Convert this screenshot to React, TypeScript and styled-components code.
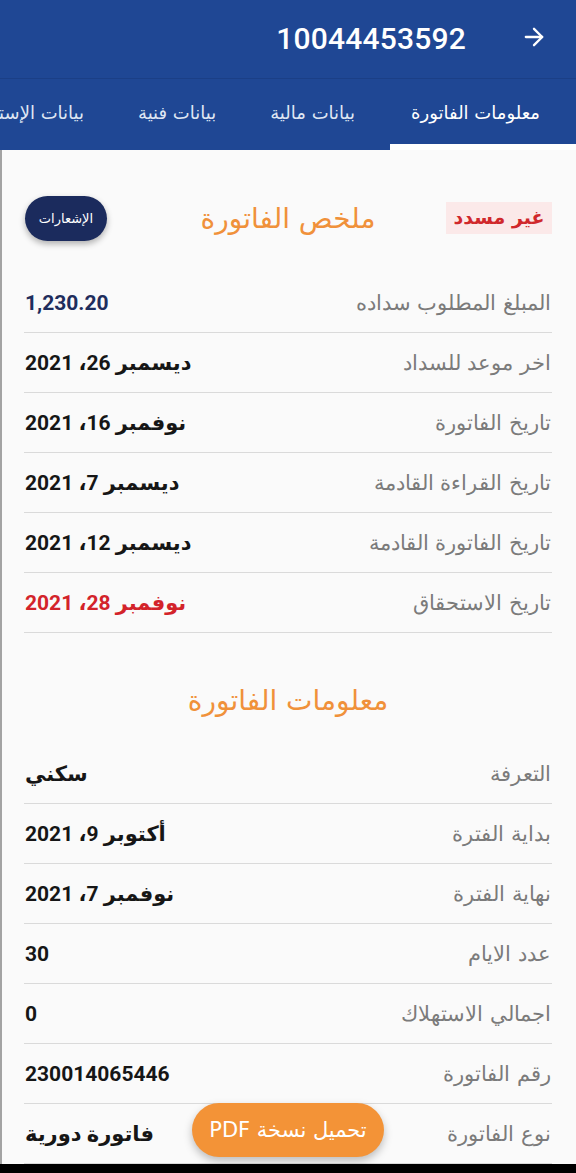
import React from "react";
import styled, { createGlobalStyle } from "styled-components";
import { ArrowRight } from "lucide-react";

const GlobalStyle = createGlobalStyle`
  * { box-sizing: border-box; }
  body {
    margin: 0;
    background: #fafafa;
    font-family: Roboto, "DejaVu Sans", sans-serif;
  }
`;

const summaryRows = [
  { label: "المبلغ المطلوب سداده", value: "1,230.20", tone: "navy" },
  { label: "اخر موعد للسداد", value: "ديسمبر 26، 2021" },
  { label: "تاريخ الفاتورة", value: "نوفمبر 16، 2021" },
  { label: "تاريخ القراءة القادمة", value: "ديسمبر 7، 2021" },
  { label: "تاريخ الفاتورة القادمة", value: "ديسمبر 12، 2021" },
  { label: "تاريخ الاستحقاق", value: "نوفمبر 28، 2021", tone: "red" },
];

const infoRows = [
  { label: "التعرفة", value: "سكني" },
  { label: "بداية الفترة", value: "أكتوبر 9، 2021" },
  { label: "نهاية الفترة", value: "نوفمبر 7، 2021" },
  { label: "عدد الايام", value: "30" },
  { label: "اجمالي الاستهلاك", value: "0" },
  { label: "رقم الفاتورة", value: "230014065446" },
  { label: "نوع الفاتورة", value: "فاتورة دورية" },
];

const tabs = ["معلومات الفاتورة", "بيانات مالية", "بيانات فنية", "بيانات الإستهلاك"];

const App: React.FC = () => {
  return (
    <Page>
      <GlobalStyle />
      <TopBar>
        <BackButton>
          <ArrowRight size={28} strokeWidth={2} color="#fff" />
        </BackButton>
        <Title>10044453592</Title>
      </TopBar>

      <TabBar>
        {tabs.map((t, i) => (
          <Tab key={t} active={i === 0}>
            {t}
          </Tab>
        ))}
      </TabBar>

      <Content>
        <SummaryHead>
          <StatusBadge>غير مسدد</StatusBadge>
          <SectionTitle>ملخص الفاتورة</SectionTitle>
          <NotifyButton>الإشعارات</NotifyButton>
        </SummaryHead>

        {summaryRows.map((r) => (
          <Row key={r.label}>
            <Label>{r.label}</Label>
            <Value tone={r.tone}>{r.value}</Value>
          </Row>
        ))}

        <InfoHead>
          <SectionTitle>معلومات الفاتورة</SectionTitle>
        </InfoHead>

        {infoRows.map((r) => (
          <Row key={r.label}>
            <Label>{r.label}</Label>
            <Value>{r.value}</Value>
          </Row>
        ))}
      </Content>

      <PdfButton>تحميل نسخة PDF</PdfButton>
      <NavStrip />
    </Page>
  );
};

const Page = styled.div`
  direction: rtl;
  position: relative;
  width: 576px;
  overflow: hidden;
`;

const TopBar = styled.header`
  height: 78px;
  background: #1f4794;
  display: flex;
  align-items: center;
  padding: 0 28px 0 0;
  gap: 54px;
`;

const BackButton = styled.div`
  display: flex;
  align-items: center;
  margin-top: -4px;
`;

const Title = styled.h1`
  margin: 0 0 2px;
  color: #fff;
  font-family: Roboto, sans-serif;
  font-weight: 500;
  font-size: 30px;
  letter-spacing: 0.2px;
`;

const TabBar = styled.nav`
  height: 72px;
  background: #1f4794;
  border-top: 1px solid #1b3f86;
  display: flex;
  align-items: stretch;
  white-space: nowrap;
`;

const Tab = styled.div<{ active?: boolean }>`
  position: relative;
  flex: none;
  display: flex;
  align-items: center;
  font-family: "DejaVu Sans", sans-serif;
  font-size: 18px;
  color: ${(p) => (p.active ? "#fff" : "#dfe6f3")};
  padding: ${(p) => (p.active ? "0 36px 4px 0" : "0 35px 4px 19px")};
  min-width: ${(p) => (p.active ? "186px" : "auto")};

  &::after {
    content: "";
    display: ${(p) => (p.active ? "block" : "none")};
    position: absolute;
    left: 0;
    right: 0;
    bottom: 0;
    height: 6px;
    background: #fff;
  }
`;

const Content = styled.main`
  padding: 0 24px 0 22px;
  border-left: 2px solid #a3a3a3;
`;

const SummaryHead = styled.div`
  height: 123px;
  display: grid;
  grid-template-columns: 1fr auto 1fr;
  align-items: center;
  padding-top: 13px;

  & > :first-child {
    justify-self: start;
  }
  & > :last-child {
    justify-self: end;
  }
`;

const StatusBadge = styled.span`
  background: #fbe9e9;
  color: #d0282c;
  font-family: "DejaVu Sans", sans-serif;
  font-weight: bold;
  font-size: 19px;
  padding: 4px 0 6px;
  width: 106px;
  text-align: center;
`;

const SectionTitle = styled.h2`
  margin: 0;
  color: #f0913a;
  font-family: "DejaVu Sans", sans-serif;
  font-weight: normal;
  font-size: 28px;
  text-align: center;
`;

const NotifyButton = styled.button`
  width: 82px;
  height: 45px;
  border: none;
  border-radius: 23px;
  background: #1b2b5d;
  color: #fff;
  font-family: "DejaVu Sans", sans-serif;
  font-size: 13px;
  padding: 0;
  box-shadow: 0 3px 6px rgba(0, 0, 0, 0.3);
  margin-left: 1px;
`;

const InfoHead = styled.div`
  height: 111px;
  display: flex;
  align-items: center;
  justify-content: center;
  padding-top: 23px;
`;

const Row = styled.div`
  height: 60px;
  display: flex;
  align-items: center;
  justify-content: space-between;
  border-bottom: 1px solid #dadada;
  padding: 0 1px 0 1px;
`;

const Label = styled.span`
  font-family: "DejaVu Sans", sans-serif;
  font-size: 21px;
  font-weight: 300;
  color: #7b7b7b;
`;

const Value = styled.span<{ tone?: string }>`
  font-family: Roboto, "DejaVu Sans", sans-serif;
  font-weight: bold;
  font-size: 21px;
  color: ${(p) =>
    p.tone === "red" ? "#d3232a" : p.tone === "navy" ? "#1f2d5c" : "#161616"};
`;

const PdfButton = styled.button`
  position: absolute;
  left: 192px;
  bottom: 16px;
  width: 192px;
  height: 54px;
  border: none;
  border-radius: 27px;
  background: #f39337;
  color: #fff;
  font-family: "DejaVu Sans", sans-serif;
  font-size: 21px;
  padding: 0;
  box-shadow: 0 4px 8px rgba(0, 0, 0, 0.25);
`;

const NavStrip = styled.div`
  height: 9px;
  background: #000;
`;

export default App;
